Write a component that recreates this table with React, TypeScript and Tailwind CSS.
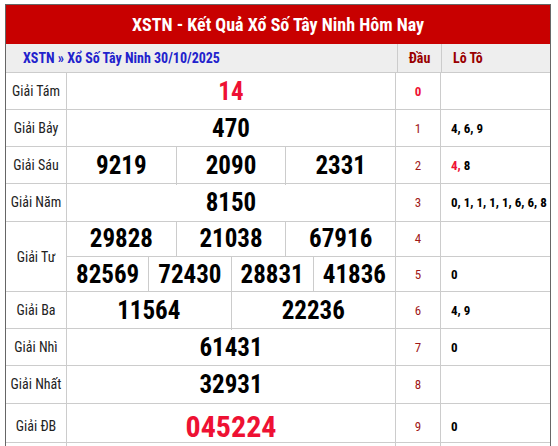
const rows = [
  { label: "Giải Tám", nums: [["14"]], red: true, dau: "0", lo: "" },
  { label: "Giải Bảy", nums: [["470"]], dau: "1", lo: "4, 6, 9" },
  { label: "Giải Sáu", nums: [["9219", "2090", "2331"]], dau: "2", lo: "8", loRed: "4," },
  { label: "Giải Năm", nums: [["8150"]], dau: "3", lo: "0, 1, 1, 1, 1, 6, 6, 8", h: "h-[38px]" },
];

const rowsB = [
  { label: "Giải Ba", nums: ["11564", "22236"], dau: "6", lo: "4, 9" },
  { label: "Giải Nhì", nums: ["61431"], dau: "7", lo: "0" },
  { label: "Giải Nhất", nums: ["32931"], dau: "8", lo: "", h: "h-[38px]" },
];

function NumCells({ nums, className }: { nums: string[]; className: string }) {
  return (
    <div className="flex h-full">
      {nums.map((n, i) => (
        <div
          key={i}
          className={`flex flex-1 items-center justify-center ${i < nums.length - 1 ? "border-r border-[#cccccc]" : ""} ${className}`}
        >
          {n}
        </div>
      ))}
    </div>
  );
}

function DauCell({ d, first }: { d: string; first?: boolean }) {
  return (
    <div
      className={`flex items-center justify-center border-r border-[#cccccc] text-[13px] ${first ? "font-bold text-[#ee1133]" : "text-[#a01818]"}`}
    >
      {d}
    </div>
  );
}

export default function App() {
  const cond = "font-stretch-condensed";
  return (
    <div className="min-h-[446px] bg-white pt-[4px] font-['Roboto',sans-serif]">
      <div className="ml-[5px] w-[546px] border border-b-0 border-[#666666]">
        <div className={`flex h-[39px] items-center justify-center bg-[#c80000] text-[18px] font-bold text-white ${cond}`}>
          XSTN - Kết Quả Xổ Số Tây Ninh Hôm Nay
        </div>
        <div className={`grid h-[29px] grid-cols-[392px_44px_108px] border-b border-[#cccccc] bg-[#eeeeee] text-[14px] font-bold ${cond}`}>
          <div className="flex items-center border-r border-[#cccccc] pl-[17px] text-[#2222cc]">
            XSTN » Xổ Số Tây Ninh 30/10/2025
          </div>
          <div className="flex items-center justify-center border-r border-[#cccccc] text-[#990000]">Đầu</div>
          <div className="flex items-center pl-[11px] text-[#990000]">Lô Tô</div>
        </div>

        <div className={cond}>
          {rows.map((r) => (
            <div
              key={r.label}
              className={`grid ${r.h ?? "h-[37px]"} grid-cols-[61px_329px_45px_109px] border-b border-[#cccccc]`}
            >
              <div className="flex items-center justify-center border-r border-[#cccccc] text-[14px] text-[#222222]">
                {r.label}
              </div>
              <div className="border-r border-[#cccccc]">
                <NumCells
                  nums={r.nums[0]}
                  className={`text-[25px] font-bold ${r.red ? "text-[#ee1133]" : "text-black"}`}
                />
              </div>
              <DauCell d={r.dau} first={r.red} />
              <div className="flex items-center pl-[10px] text-[13px] font-bold text-black">
                <span>
                  {r.loRed && <span className="text-[#ee1133]">{r.loRed}</span>}
                  {r.loRed && " "}
                  {r.lo}
                </span>
              </div>
            </div>
          ))}

          <div className="grid h-[70px] grid-cols-[61px_329px_45px_109px] border-b border-[#cccccc]">
            <div className="flex items-center justify-center border-r border-[#cccccc] text-[14px] text-[#222222]">
              Giải Tư
            </div>
            <div className="flex flex-col border-r border-[#cccccc]">
              <div className="h-[35px] border-b border-[#cccccc]">
                <NumCells nums={["29828", "21038", "67916"]} className="text-[25px] font-bold text-black" />
              </div>
              <div className="h-[35px]">
                <NumCells nums={["82569", "72430", "28831", "41836"]} className="text-[25px] font-bold text-black" />
              </div>
            </div>
            <div className="flex flex-col border-r border-[#cccccc] text-[13px] text-[#a01818]">
              <div className="flex h-[35px] items-center justify-center border-b border-[#cccccc]">4</div>
              <div className="flex h-[35px] items-center justify-center">5</div>
            </div>
            <div className="flex flex-col text-[13px] font-bold text-black">
              <div className="flex h-[35px] items-center border-b border-[#cccccc] pl-[10px]"></div>
              <div className="flex h-[35px] items-center pl-[10px]">0</div>
            </div>
          </div>

          {rowsB.map((r) => (
            <div
              key={r.label}
              className={`grid ${r.h ?? "h-[37px]"} grid-cols-[61px_329px_45px_109px] border-b border-[#cccccc]`}
            >
              <div className="flex items-center justify-center border-r border-[#cccccc] text-[14px] text-[#222222]">
                {r.label}
              </div>
              <div className="border-r border-[#cccccc]">
                <NumCells nums={r.nums} className="text-[25px] font-bold text-black" />
              </div>
              <DauCell d={r.dau} />
              <div className="flex items-center pl-[10px] text-[13px] font-bold text-black">{r.lo}</div>
            </div>
          ))}

          <div className="grid h-[39px] grid-cols-[61px_329px_45px_109px] border-b border-[#cccccc]">
            <div className="flex items-center justify-center border-r border-[#cccccc] text-[14px] text-[#222222]">
              Giải ĐB
            </div>
            <div className="flex items-center justify-center border-r border-[#cccccc] text-[30px] font-bold text-[#ee1133]">
              045224
            </div>
            <DauCell d="9" />
            <div className="flex items-center pl-[10px] text-[13px] font-bold text-black">0</div>
          </div>
          <div className="h-[20px]"></div>
        </div>
      </div>
    </div>
  );
}
